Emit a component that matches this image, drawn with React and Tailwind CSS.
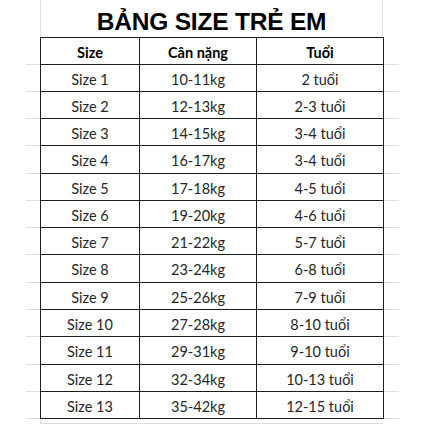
const ROWS = [
  ['Size 1', '10-11kg', '2 tuổi'],
  ['Size 2', '12-13kg', '2-3 tuổi'],
  ['Size 3', '14-15kg', '3-4 tuổi'],
  ['Size 4', '16-17kg', '3-4 tuổi'],
  ['Size 5', '17-18kg', '4-5 tuổi'],
  ['Size 6', '19-20kg', '4-6 tuổi'],
  ['Size 7', '21-22kg', '5-7 tuổi'],
  ['Size 8', '23-24kg', '6-8 tuổi'],
  ['Size 9', '25-26kg', '7-9 tuổi'],
  ['Size 10', '27-28kg', '8-10 tuổi'],
  ['Size 11', '29-31kg', '9-10 tuổi'],
  ['Size 12', '32-34kg', '10-13 tuổi'],
  ['Size 13', '35-42kg', '12-15 tuổi'],
]

function Row({ cells, bold, first, tall }) {
  const cell = 'flex items-center justify-center pt-[3px] border-r border-[#1c1c1c]'
  return (
    <div className="flex pl-[26px]">
      <div className="w-[14px] border-b border-[#dcdcdc]" />
      <div className={`flex ${tall ? 'h-[28px]' : 'h-[27px]'} border-l border-b border-[#1c1c1c] ${first ? 'border-t h-[28px]' : ''} ${bold ? 'font-bold text-black' : 'text-[#262626]'}`}>
        <div className={`w-[99px] ${cell}`}>{cells[0]}</div>
        <div className={`w-[117px] ${cell}`}>{cells[1]}</div>
        <div className={`w-[127px] ${cell}`}>{cells[2]}</div>
      </div>
      <div className="w-[15px] border-b border-[#dcdcdc]" />
    </div>
  )
}

export default function App() {
  return (
    <div className="w-[425px] h-[425px] bg-white overflow-hidden text-[14.5px] font-['Lato','Open_Sans',sans-serif]">
      {/* title cell with sheet gridlines */}
      <div className="ml-[40px] w-[343px] h-[38px] border-l border-r border-[#e4e4e4] flex items-end justify-center pb-[4px]">
        <h1 className="font-['Liberation_Sans',Arial,sans-serif] font-bold text-[24.5px] leading-none text-black tracking-[-0.2px]">
          BẢNG SIZE TRẺ EM
        </h1>
      </div>
      <div className="-mt-px">
        <Row cells={['Size', 'Cân nặng', 'Tuổi']} bold first />
        {ROWS.map((r, i) => (
          <Row key={i} cells={r} tall={i === 3 || i === 7 || i === 10} />
        ))}
      </div>
      <div className="flex pl-[40px]">
        <div className="w-[343px] h-[5px] border-l border-b border-[#dcdcdc]" />
      </div>
    </div>
  )
}
